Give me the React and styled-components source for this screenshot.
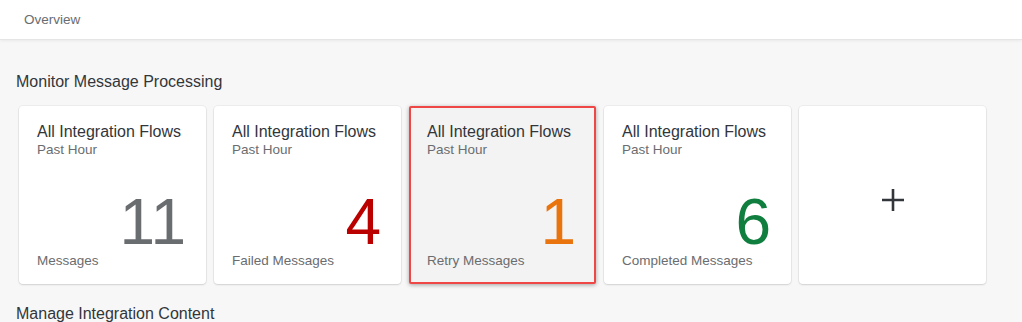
import React from 'react';
import styled, { createGlobalStyle } from 'styled-components';

const GlobalStyle = createGlobalStyle`
    body {
        margin: 0;
        background: #f7f7f7;
        font-family: 'Liberation Sans', Arial, sans-serif;
        color: #32363a;
    }
`

const Header = styled.header`
    display: flex;
    align-items: center;
    height: 39px;
    padding-left: 24px;
    background: #ffffff;
    border-bottom: 1px solid #e5e5e5;
    box-shadow: 0 1px 3px rgba(0, 0, 0, 0.06);
    font-size: 13.5px;
    color: #6a6d70;
`

const Page = styled.main`
    padding: 32px 0 0 16px;
`

const SectionTitle = styled.h2`
    margin: 0;
    font-size: 16px;
    font-weight: 400;
    line-height: 20px;
    color: #32363a;
`

const TileRow = styled.div`
    display: grid;
    grid-template-columns: repeat(5, 187px);
    gap: 8px;
    margin: 14px 0 20px 3px;
`

// the highlighted tile gets the red frame and a grey hover background
const Tile = styled.div`
    box-sizing: border-box;
    height: 178px;
    display: flex;
    flex-direction: column;
    padding: 16px 17px 14px 17px;
    background: ${props => props.$active ? '#f3f3f3' : '#ffffff'};
    border-radius: 4px;
    border: ${props => props.$active ? '2px solid #ef4646' : '1px solid transparent'};
    box-shadow: ${props => props.$active
        ? '0 1px 4px rgba(0, 0, 0, 0.35)'
        : '0 0 0 1px rgba(0, 0, 0, 0.04), 0 1px 2px rgba(0, 0, 0, 0.12)'};
    ${props => props.$active && 'border-radius: 2px; padding: 15px 16px 13px 16px;'}
`

const TileTitle = styled.div`
    font-size: 16px;
    line-height: 18px;
    color: #32363a;
    white-space: nowrap;
`

const TileSubtitle = styled.div`
    font-size: 13.5px;
    line-height: 17px;
    color: #6a6d70;
`

const TileContent = styled.div`
    flex: 1;
    display: flex;
    align-items: flex-end;
    justify-content: flex-end;
    padding-right: 2px;
`

const Number = styled.div`
    font-size: 64px;
    line-height: 56px;
    color: ${props => props.$color};
    margin-bottom: 3px;
`

const TileFooter = styled.div`
    font-size: 13.5px;
    line-height: 16px;
    color: #6a6d70;
`

const AddTile = styled(Tile)`
    align-items: center;
    justify-content: center;
    padding-top: 24px;
`

const tiles = [
    { value: '11', label: 'Messages', color: '#6a6d70' },
    { value: '4', label: 'Failed Messages', color: '#bb0000' },
    { value: '1', label: 'Retry Messages', color: '#e9730c', active: true },
    { value: '6', label: 'Completed Messages', color: '#107e3e' },
]

export default function App()
{
    return (
        <>
            <GlobalStyle />
            <Header>Overview</Header>
            <Page>
                <SectionTitle>Monitor Message Processing</SectionTitle>
                <TileRow>
                    {tiles.map(tile => (
                        <Tile key={tile.label} $active={tile.active}>
                            <TileTitle>All Integration Flows</TileTitle>
                            <TileSubtitle>Past Hour</TileSubtitle>
                            <TileContent>
                                <Number $color={tile.color}>{tile.value}</Number>
                            </TileContent>
                            <TileFooter>{tile.label}</TileFooter>
                        </Tile>
                    ))}
                    <AddTile>
                        <svg width="22" height="22" viewBox="0 0 22 22">
                            <path d="M11 0 V22 M0 11 H22" stroke="#32363a" strokeWidth="2.6" fill="none" />
                        </svg>
                    </AddTile>
                </TileRow>
                <SectionTitle>Manage Integration Content</SectionTitle>
            </Page>
        </>
    )
}
